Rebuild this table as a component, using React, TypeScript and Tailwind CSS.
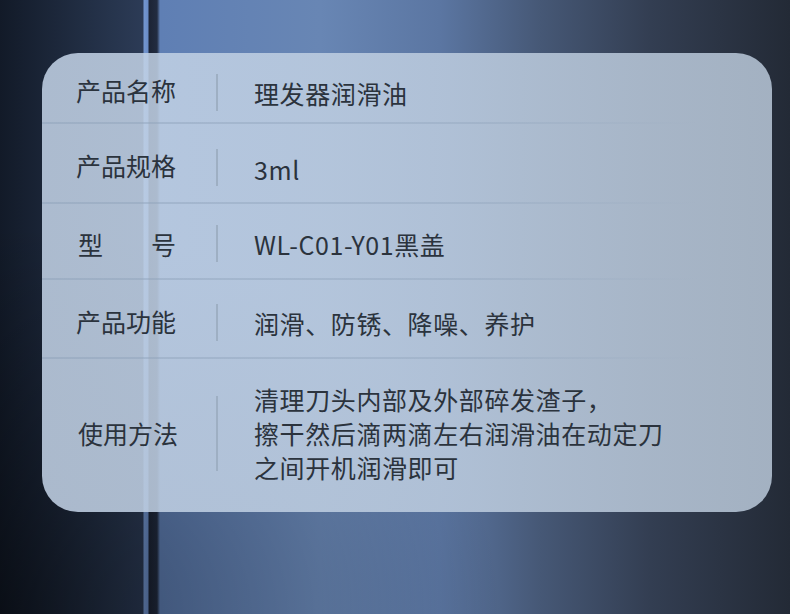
const rows = [
  { label: "产品名称", value: ["理发器润滑油"], h: "h-[69px] pt-[9px]", lpad: "mb-[5px]", vpad: "pt-[1px]" },
  { label: "产品规格", value: ["3ml"], h: "h-[78px] pt-[8px]", lpad: "mb-[4px]", vpad: "pt-[3px]" },
  { label: "型号", value: ["WL-C01-Y01黑盖"], h: "h-[74px] pt-[5px]", lpad: "", vpad: "" },
  { label: "产品功能", value: ["润滑、防锈、降噪、养护"], h: "h-[77px] pt-[8px]", lpad: "mb-[4px]", vpad: "" },
  {
    label: "使用方法",
    value: ["清理刀头内部及外部碎发渣子，", "擦干然后滴两滴左右润滑油在动定刀", "之间开机润滑即可"],
    h: "flex-1 pb-[5px]",
    lpad: "",
    vpad: "",
  },
];

const Divider = () => (
  <div className="h-[2px] w-full bg-[linear-gradient(90deg,rgba(140,160,184,0.45),rgba(140,160,184,0.35)_60%,rgba(140,160,184,0)_90%)]" />
);

export default function App() {
  return (
    <div className="h-[614px] w-full overflow-hidden pl-[42px] pt-[53px] font-['Noto_Sans_CJK_SC','Noto_Sans',sans-serif] bg-[radial-gradient(ellipse_at_0%_100%,rgba(0,0,0,0.45),rgba(0,0,0,0)_45%),linear-gradient(90deg,#121a28_0px,#26344c_110px,#2c3b56_143px,#7396cf_144px,#6a8cc6_148px,#1c2435_149px,#222c40_157px,#5f7fb4_160px,#6886b4_320px,#5b76a2_440px,#465876_540px,#333e52_650px,#232a36_790px)]">
      <div className="flex h-[459px] w-[730px] flex-col overflow-hidden rounded-[36px] bg-[linear-gradient(90deg,rgba(196,212,232,0.86),rgba(184,199,216,0.86))] text-[#2b333d]">
        {rows.map((row, i) => (
          <div key={row.label} className={`flex flex-col ${i === rows.length - 1 ? "flex-1" : ""}`}>
            <div className={`flex items-center ${row.h}`}>
              <div className={`w-[174px] shrink-0 pl-[34px] text-[25px] leading-[34px] ${row.lpad}`}>
                {row.label === "型号" ? (
                  <div className="flex w-[100px] justify-between pl-[2px]">
                    <span>型</span>
                    <span>号</span>
                  </div>
                ) : (
                  <span className={i === rows.length - 1 ? "pl-[2px]" : ""}>{row.label}</span>
                )}
              </div>
              <div
                className={`w-[2px] shrink-0 bg-[#9eafc3] ${i === rows.length - 1 ? "h-[75px]" : "h-[37px]"}`}
              />
              <div className={`pl-[36px] text-[25px] leading-[34px] tracking-[0.6px] ${row.vpad}`}>
                {row.value.map((line) => (
                  <div key={line}>{line}</div>
                ))}
              </div>
            </div>
            {i < rows.length - 1 && <Divider />}
          </div>
        ))}
      </div>
    </div>
  );
}
